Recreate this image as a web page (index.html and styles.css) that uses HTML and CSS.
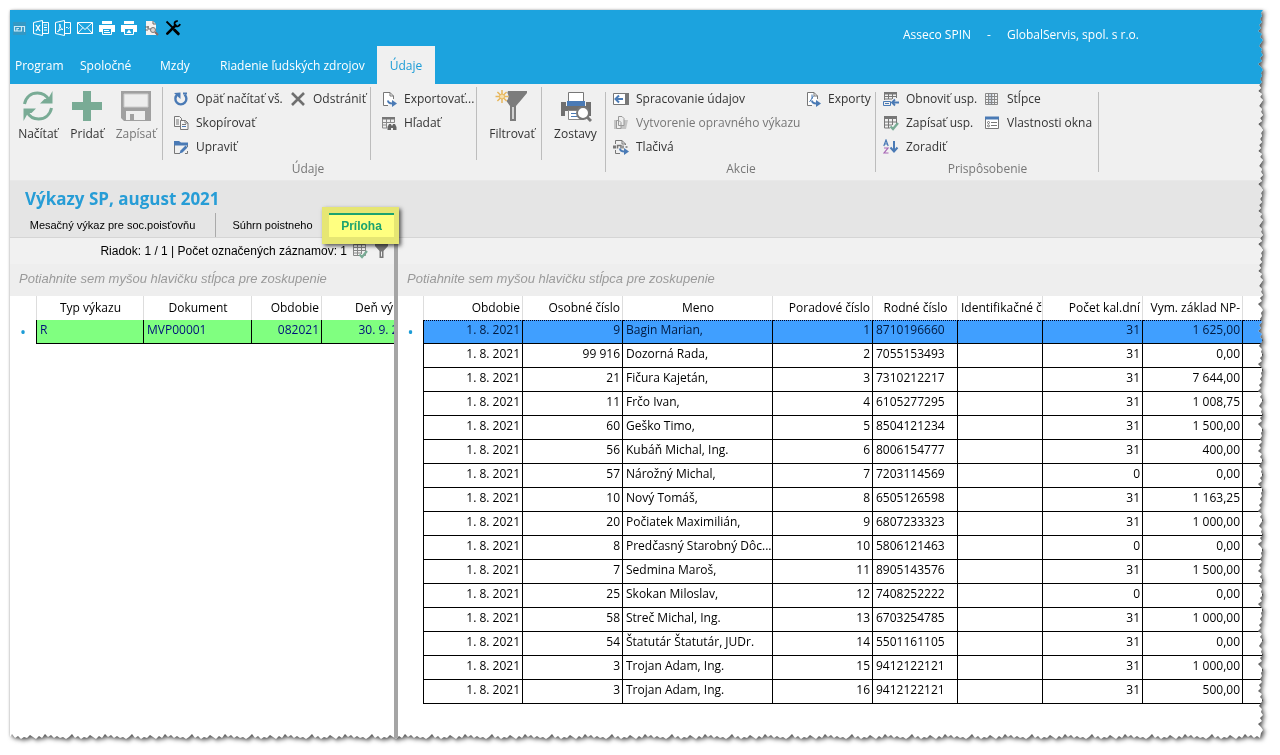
FILE: index.html
```html
<!DOCTYPE html>
<html lang="sk">
<head>
<meta charset="utf-8">
<title>Asseco SPIN</title>
<link rel="stylesheet" href="styles.css">
</head>
<body>
<div class="shadow">
<div class="window" id="window">
  <header class="titlebar">
    <div class="quick">
      <button class="quick-btn" aria-label="Aplikácia"><svg width="13" height="13" viewBox="0 0 13 13"><path d="M0 0h13v13H0z" fill="#3398c4"/><path d="M6 6.500H4V9h4.500V4.500H1.500V9H4M1.500 4.500h10V10" fill="none" stroke="#cdeaf7" stroke-width="1.200"/></svg></button>
      <button class="quick-btn" aria-label="Excel"><svg width="16" height="16" viewBox="0 0 16 16" fill="none" stroke="#fff"><path d="M.5 2.500l9-2v15l-9-2zM9.500 2.500h6v11h-6M11 5h3M11 7.500h3M11 10h3"/><path d="M3 5l4 6M7 5l-4 6" stroke-width="1.300"/></svg></button>
      <button class="quick-btn" aria-label="PDF"><svg width="16" height="16" viewBox="0 0 16 16" fill="none" stroke="#fff"><path d="M.5 2.500l9-2v15l-9-2zM9.500 2.500h6v11h-6M11 7.500h1.500l1 1 1-1"/><path d="M2.500 12c2-2 3-5 2.300-8 0 3 1 4.500 3.200 5.500-2-.3-4 .5-5.500 2.500"/></svg></button>
      <button class="quick-btn" aria-label="Pošta"><svg width="16" height="16" viewBox="0 0 16 16" fill="none" stroke="#fff"><path d="M.5 2.500h15v11H.5zM.5 2.500L8 9.500l7.500-7M.5 13.500l5.500-6M15.500 13.500l-5.500-6"/></svg></button>
      <button class="quick-btn" aria-label="Tlač"><svg width="16" height="16" viewBox="0 0 16 16"><path d="M3 1h10v3H3zM0 5h16v7h-3V9H3v3H0z" fill="#fff"/><path d="M3.500 8.500h9v6h-9z" fill="#1ca3de" stroke="#fff"/><path d="M5 10.500h5M5 12.500h6" stroke="#fff"/></svg></button>
      <button class="quick-btn" aria-label="Náhľad tlače"><svg width="16" height="16" viewBox="0 0 16 16"><path d="M3 1h10v3H3zM0 5h16v7h-3V9H3v3H0z" fill="#fff"/><path d="M3.500 8.500h9v6h-9z" fill="#1ca3de" stroke="#fff"/><path d="M5.500 13L8 9.500l2.500 3.500z" fill="#fff"/></svg></button>
      <button class="quick-btn" aria-label="Hľadať zostavu"><svg width="16" height="16" viewBox="0 0 16 16"><path d="M3 1h7l3 3v11H3z" fill="#f5f2f0"/><path d="M10 1v3h3M2 7h4M5 6v3h3M2 10h3" fill="none" stroke="#666"/><circle cx="10" cy="10" r="2.500" fill="#d8d4d2" stroke="#777"/><path d="M12 12l3 3" stroke="#886a66" stroke-width="2"/></svg></button>
      <button class="quick-btn" aria-label="Nástroje"><svg width="16" height="16" viewBox="0 0 16 16" fill="none" stroke="#000"><path d="M1.500 1.500l6 6" stroke-width="1.800"/><path d="M9.500 10l3.800 3.800" stroke-width="3" stroke-linecap="round"/><path d="M2.300 13.700L10.500 5.500" stroke-width="2.600" stroke-linecap="round"/><path d="M12.800 1.200c-2-.4-3.500 1-3.200 2.800.3 1.700 1.800 2.600 3.200 2.300 1.200-.2 2-1.200 2.200-2.300" stroke-width="1.800"/></svg></button>
    </div>
    <div class="caption"><span>Asseco SPIN</span><span>-</span><span>GlobalServis, spol. s r.o.</span></div>
  </header>
  <nav class="menu">
    <a href="#" class="m-program">Program</a>
    <a href="#" class="m-common">Spoločné</a>
    <a href="#" class="m-pay">Mzdy</a>
    <a href="#" class="m-hr">Riadenie ľudských zdrojov</a>
    <a href="#" class="m-active">Údaje</a>
  </nav>

  <div class="ribbon">
    <section class="group g-data">
      <div class="group-body">
        <div class="section s-main">
          <button class="big"><svg width="32" height="32" viewBox="0 0 32 32" fill="none" stroke="#79ab95" stroke-width="3"><path d="M2.500 14C4 7 9 3 15.500 3c5 0 9 2.500 11.500 7"/><path d="M30.500 1v12.500H18l4.500-4.500H26z" stroke="none" fill="#79ab95"/><path d="M29.500 18C28 25 23 29 16.500 29c-5 0-9-2.500-11.500-7"/><path d="M1.500 31V18.500H14L9.500 23H6z" stroke="none" fill="#79ab95"/></svg><span>Načítať</span></button>
          <button class="big"><svg width="32" height="32" viewBox="0 0 32 32"><path d="M12 1h8v11h11v8H20v11h-8V20H1v-8h11z" fill="#79ab95"/></svg><span>Pridať</span></button>
          <button class="big" disabled><svg width="32" height="32" viewBox="0 0 32 32"><path d="M1 1h30v30H4l-3-3z" fill="#a0a0a0"/><path d="M4 4h24v13H4z" fill="#ededed" stroke="#ccc"/><path d="M6 21h19v9H6z" fill="#eee"/><path d="M10 24h4v6h-4z" fill="#a0a0a0"/></svg><span>Zapísať</span></button>
        </div>
        <div class="section s-edit">
          <button class="small"><svg width="16" height="16" viewBox="0 0 16 16" fill="none" stroke="#4a7ab5" stroke-width="2.400"><path d="M4.500 3.500A5.500 5.500 0 1 0 11.500 3.700"/><path d="M1 2l6.500-.5V8z" fill="#4a7ab5" stroke="none"/><path d="M10 2.500h4" stroke-width="2"/></svg><span>Opäť načítať vš.</span></button>
          <button class="small"><svg width="16" height="16" viewBox="0 0 16 16" stroke="#6f6f6f" stroke-width="2.600"><path d="M2 2l12 12M14 2L2 14"/></svg><span>Odstrániť</span></button>
          <button class="small"><svg width="16" height="16" viewBox="0 0 16 16" fill="#f5f5f5" stroke="#777"><path d="M1.500 1.500h5l2 2v8h-7zM3 5h3M3 7h3M3 9h3"/><path d="M7.500 5.500h5l2.500 2.500v6.500H7.500z"/><path d="M12 5.500V8h3M9 9.500h4" fill="none"/><path d="M9 11.500h4" stroke="#4a7ab5"/></svg><span>Skopírovať</span></button>
          <button class="small row-start"><svg width="16" height="16" viewBox="0 0 16 16"><path d="M1.500 4v10.500H7M14.500 5v3M12 14.500h2.500V12" fill="none" stroke="#777"/><path d="M1 2h5l2 1.500h7v3H1z" fill="#4a7ab5"/><path d="M6.500 14.500l1-3 5-5 2 2-5 5z" fill="#4a7ab5"/></svg><span>Upraviť</span></button>
        </div>
        <div class="section s-export">
          <button class="small"><svg width="16" height="16" viewBox="0 0 16 16" fill="none" stroke="#777"><path d="M7 14.500H2.500V1.500H9l3.500 3.500v3" fill="#fff"/><path d="M9 1.500V5h3.500"/><path d="M7 9.500c0 2.500 2 3 5 3" stroke="#4a7ab5" stroke-width="2"/><path d="M11 9l5 3.500-5 3.500z" fill="#4a7ab5" stroke="none"/></svg><span>Exportovať...</span></button>
          <button class="small"><svg width="16" height="16" viewBox="0 0 16 16"><path d="M1 2h13v2.500H1z" fill="#777"/><path d="M1.500 4v9H6M1 7.500h12.500V4M1 10h5M5.500 4v9M9.500 4v4" fill="none" stroke="#888"/><path d="M8 9h2l.5 1.500h1L12 9h2l1.500 3v3H12v-2h-2v2H6.500v-3z" fill="#666"/></svg><span>Hľadať</span></button>
        </div>
        <div class="section s-filter">
          <button class="big"><svg width="34" height="32" viewBox="0 0 34 32"><path d="M13 1h19v2l-11 13v15h-6V16L10 9z" fill="#7c7c7c"/><path d="M18 17v12" stroke="#eee" stroke-width="1.500"/><circle cx="7" cy="6.500" r="6.500" fill="#f0f0f0"/><path d="M7 0v13M.5 6.500h13M2.400 2l9.200 9M11.600 2l-9.200 9" stroke="#e8b75c" stroke-width="1.500"/><circle cx="7" cy="6.500" r="2.500" fill="#f5dfae" stroke="#e8b75c"/></svg><span>Filtrovať</span></button>
        </div>
        <div class="section s-reports">
          <button class="big"><svg width="32" height="32" viewBox="0 0 32 32"><path d="M8.500 2.500h15v9h-15z" fill="#fff" stroke="#777"/><path d="M1 12h5v4h20v-4h5v14h-4v-5H5v5H1z" fill="#6f6f6f"/><path d="M7 11h18v5H7z" fill="#4a7ab5"/><path d="M8.500 20.500h15v9h-15z" fill="#fff" stroke="#888"/><path d="M11 23.500h5M11 26.500h6" stroke="#4a7ab5"/><circle cx="23" cy="23" r="6" fill="#fff" stroke="#777" stroke-width="2"/><path d="M27 27l4 4" stroke="#777" stroke-width="3"/></svg><span>Zostavy</span></button>
        </div>
      </div>
      <h2>Údaje</h2>
    </section>
    <section class="group g-actions">
      <div class="group-body">
        <div class="section s-actions">
          <button class="small"><svg width="16" height="16" viewBox="0 0 16 16"><path d="M.5 2.500h15v11H.5z" fill="#fff" stroke="#777"/><path d="M12 2h4v12h-4z" fill="#777"/><path d="M2 8h8M6 4.500L2.500 8 6 11.500" stroke="#4a7ab5" stroke-width="2" fill="none"/></svg><span>Spracovanie údajov</span></button>
          <button class="small"><svg width="16" height="16" viewBox="0 0 16 16" fill="none" stroke="#777"><path d="M7 14.500H2.500V1.500H9l3.500 3.500v3" fill="#fff"/><path d="M9 1.500V5h3.500"/><path d="M7 3.500v4.500M8.500 5L4.500 11" stroke="#4a7ab5"/><path d="M7 9.500c0 2.500 2 3 5 3" stroke="#4a7ab5" stroke-width="2"/><path d="M11 9l5 3.500-5 3.500z" fill="#4a7ab5" stroke="none"/></svg><span>Exporty</span></button>
          <button class="small row-start" disabled><svg width="16" height="16" viewBox="0 0 16 16"><path d="M1 5h14l-2 9H1z" fill="#c5c5c5"/><path d="M5.500 1.500h3.500l2 2v7H5.500zM3.500 5.500h2.500l2 2v6H3.500z" fill="#eee" stroke="#999"/></svg><span>Vytvorenie opravného výkazu</span></button>
          <button class="small row-start"><svg width="16" height="16" viewBox="0 0 16 16" fill="none" stroke="#777"><path d="M2.500 5V1.500H9l3.500 3.500v1M9 1.500V5h3.500M2.500 11v3.500H7"/><path d="M0 8h3" stroke-width="3"/><path d="M4.500 9.500v-3H8v3M10 6.500v3M12.500 8h2" stroke-width="1.500"/><path d="M7 9.500c0 2.500 2 3 5 3" stroke="#4a7ab5" stroke-width="2"/><path d="M11 9l5 3.500-5 3.500z" fill="#4a7ab5" stroke="none"/></svg><span>Tlačivá</span></button>
        </div>
      </div>
      <h2>Akcie</h2>
    </section>
    <section class="group g-custom">
      <div class="group-body">
        <div class="section s-custom">
          <button class="small"><svg width="16" height="16" viewBox="0 0 16 16" fill="none" stroke="#777"><path d="M1 1h13v2.500H1z" fill="#777" stroke="none"/><path d="M1.500 3v6M5.500 3v5M9.500 3v5M13.500 3v4M1 5.500h13M1 8h8"/><path d="M.5 10.500h7v4h-7zM2 12.500h4" stroke="#4a7ab5"/><path d="M9 11.500h7M12 8.500l-3 3 3 3" stroke="#4a7ab5" stroke-width="1.800"/></svg><span>Obnoviť usp.</span></button>
          <button class="small"><svg width="16" height="16" viewBox="0 0 16 16" fill="none" stroke="#888"><path d="M5 2h4v12H5z" fill="#cdd6e2" stroke="none"/><path d="M1.500 2.500h12v11h-12zM4.500 2v12M7.500 2v12M10.500 2v12M1 5.500h13M1 8.500h13M1 11.500h13"/></svg><span>Stĺpce</span></button>
          <button class="small"><svg width="16" height="16" viewBox="0 0 16 16" fill="none" stroke="#777"><path d="M1 1h13v3H1z" fill="#777" stroke="none"/><path d="M1.500 3v10H7M5.500 3v10M9.500 3v7M13.500 3v6M1 7h12M1 10h8"/><path d="M7.500 11.500l2.500 2.500 5-6" stroke="#79ab95" stroke-width="2.400"/></svg><span>Zapísať usp.</span></button>
          <button class="small"><svg width="16" height="16" viewBox="0 0 16 16" fill="none" stroke="#777"><path d="M1.500 2.500h13v11h-13z" fill="#fff"/><path d="M1 1.500h14v3H1z" fill="#4a7ab5" stroke="none"/><path d="M7 7.500h6M7 10.500h6"/><circle cx="4.500" cy="7.500" r="1"/><circle cx="4.500" cy="10.800" r="1"/></svg><span>Vlastnosti okna</span></button>
          <button class="small row-start"><svg width="16" height="16" viewBox="0 0 16 16" fill="none"><path d="M.8 7L3 1l2.200 6M1.500 5h3" stroke="#4a7ab5" stroke-width="1.200"/><path d="M1 9h4L1 14h4.500" stroke="#a766b5" stroke-width="1.200"/><path d="M11 2v11M7.500 8.500L11 12.500l3.500-4" stroke="#4a7ab5" stroke-width="2"/></svg><span>Zoradiť</span></button>
        </div>
      </div>
      <h2>Prispôsobenie</h2>
    </section>
  </div>

  <div class="heading">
    <h1>Výkazy SP, august 2021</h1>
    <div class="tabs" role="tablist">
      <button class="tab t-month" role="tab">Mesačný výkaz pre soc.poisťovňu</button>
      <button class="tab t-sum" role="tab">Súhrn poistneho</button>
      <button class="tab t-annex" role="tab" aria-selected="true"><span>Príloha</span></button>
    </div>
  </div>

  <main class="panes">
    <section class="pane pane-left">
      <div class="status">
        <span>Riadok: 1 / 1 | Počet označených záznamov: 1</span>
        <svg width="16" height="16" viewBox="0 0 16 16" fill="none" stroke="#888"><path d="M1.500 1.500h12v11h-12zM1 4.500h13M1 7.500h13M1 10h8M5.500 2v11M9.500 2v9"/><path d="M7.500 11.500l2.500 2.500 5-6" stroke="#79ab95" stroke-width="2.200"/></svg>
        <svg width="16" height="16" viewBox="0 0 16 16"><path d="M2 1h13v2l-4.500 5v7h-4V8L2 3z" fill="#777"/><path d="M8.500 8.500v5" stroke="#eee"/></svg>
      </div>
      <div class="grouping">Potiahnite sem myšou hlavičku stĺpca pre zoskupenie</div>
      <table class="grid grid-left">
        <colgroup><col class="w-mark"><col class="w-type"><col class="w-doc"><col class="w-per"><col class="w-day"></colgroup>
        <thead><tr><th></th><th class="c">Typ výkazu</th><th class="c">Dokument</th><th>Obdobie</th><th>Deň výkazu</th></tr></thead>
        <tbody><tr class="green"><td class="mark">•</td><td class="l">R</td><td class="l">MVP00001</td><td>082021</td><td>30. 9. 2021</td></tr></tbody>
      </table>
    </section>
    <div class="splitter"></div>
    <section class="pane pane-right">
      <div class="status"></div>
      <div class="grouping">Potiahnite sem myšou hlavičku stĺpca pre zoskupenie</div>
      <table class="grid grid-right">
        <colgroup><col class="w-mark2"><col class="w-99"><col class="w-100"><col class="w-150"><col class="w-100"><col class="w-85"><col class="w-85"><col class="w-100"><col class="w-100"><col></colgroup>
        <thead><tr><th></th><th>Obdobie</th><th>Osobné číslo</th><th class="c">Meno</th><th>Poradové číslo</th><th class="c">Rodné číslo</th><th class="l">Identifikačné č</th><th>Počet kal.dní</th><th>Vym. základ NP-</th><th></th></tr></thead>
        <tbody>
          <tr class="blue"><td class="mark">•</td><td>1. 8. 2021</td><td>9</td><td class="l">Bagin Marian,</td><td>1</td><td class="l">8710196660</td><td></td><td>31</td><td>1 625,00</td><td></td></tr>
          <tr><td></td><td>1. 8. 2021</td><td>99 916</td><td class="l">Dozorná Rada,</td><td>2</td><td class="l">7055153493</td><td></td><td>31</td><td>0,00</td><td></td></tr>
          <tr><td></td><td>1. 8. 2021</td><td>21</td><td class="l">Fičura Kajetán,</td><td>3</td><td class="l">7310212217</td><td></td><td>31</td><td>7 644,00</td><td></td></tr>
          <tr><td></td><td>1. 8. 2021</td><td>11</td><td class="l">Frčo Ivan,</td><td>4</td><td class="l">6105277295</td><td></td><td>31</td><td>1 008,75</td><td></td></tr>
          <tr><td></td><td>1. 8. 2021</td><td>60</td><td class="l">Geško Timo,</td><td>5</td><td class="l">8504121234</td><td></td><td>31</td><td>1 500,00</td><td></td></tr>
          <tr><td></td><td>1. 8. 2021</td><td>56</td><td class="l">Kubáň Michal, Ing.</td><td>6</td><td class="l">8006154777</td><td></td><td>31</td><td>400,00</td><td></td></tr>
          <tr><td></td><td>1. 8. 2021</td><td>57</td><td class="l">Nárožný Michal,</td><td>7</td><td class="l">7203114569</td><td></td><td>0</td><td>0,00</td><td></td></tr>
          <tr><td></td><td>1. 8. 2021</td><td>10</td><td class="l">Nový Tomáš,</td><td>8</td><td class="l">6505126598</td><td></td><td>31</td><td>1 163,25</td><td></td></tr>
          <tr><td></td><td>1. 8. 2021</td><td>20</td><td class="l">Počiatek Maximilián,</td><td>9</td><td class="l">6807233323</td><td></td><td>31</td><td>1 000,00</td><td></td></tr>
          <tr><td></td><td>1. 8. 2021</td><td>8</td><td class="l">Predčasný Starobný Dôc...</td><td>10</td><td class="l">5806121463</td><td></td><td>0</td><td>0,00</td><td></td></tr>
          <tr><td></td><td>1. 8. 2021</td><td>7</td><td class="l">Sedmina Maroš,</td><td>11</td><td class="l">8905143576</td><td></td><td>31</td><td>1 500,00</td><td></td></tr>
          <tr><td></td><td>1. 8. 2021</td><td>25</td><td class="l">Skokan Miloslav,</td><td>12</td><td class="l">7408252222</td><td></td><td>0</td><td>0,00</td><td></td></tr>
          <tr><td></td><td>1. 8. 2021</td><td>58</td><td class="l">Streč Michal, Ing.</td><td>13</td><td class="l">6703254785</td><td></td><td>31</td><td>1 000,00</td><td></td></tr>
          <tr><td></td><td>1. 8. 2021</td><td>54</td><td class="l">Štatutár Štatutár, JUDr.</td><td>14</td><td class="l">5501161105</td><td></td><td>31</td><td>0,00</td><td></td></tr>
          <tr><td></td><td>1. 8. 2021</td><td>3</td><td class="l">Trojan Adam, Ing.</td><td>15</td><td class="l">9412122121</td><td></td><td>31</td><td>1 000,00</td><td></td></tr>
          <tr><td></td><td>1. 8. 2021</td><td>3</td><td class="l">Trojan Adam, Ing.</td><td>16</td><td class="l">9412122121</td><td></td><td>31</td><td>500,00</td><td></td></tr>
        </tbody>
      </table>
    </section>
  </main>
</div>
</div>
<script src="torn-edge.js"></script>
</body>
</html>
```
FILE: torn-edge.js
```js
// Cuts the right and bottom sides of the window into a ragged paper edge.
(function () {
  var el = document.getElementById('window');
  var depths = [0, 2, 1, 3, 1, 4, 2, 5, 1, 3, 0, 2, 4, 1, 2, 0, 3, 1, 5, 2];
  function tear() {
    var w = el.offsetWidth, h = el.offsetHeight, pts = ['0px 0px'], i = 0;
    for (var y = 0; y < h - 4; y += 3) pts.push((w - depths[i++ % 20]) + 'px ' + y + 'px');
    for (var x = w - 3; x > 0; x -= 3) pts.push(x + 'px ' + (h - depths[i++ % 20]) + 'px');
    pts.push('0px ' + (h - 2) + 'px');
    el.style.clipPath = 'polygon(' + pts.join(',') + ')';
  }
  tear();
  window.addEventListener('resize', tear);
})();
```
FILE: styles.css
```css
* { box-sizing: border-box; }

body {
  margin: 0;
  padding: 10px 17px 16px 10px;
  background: #fff;
  font: 12px/16px "Open Sans", "Noto Sans", sans-serif;
  color: #222;
}

button {
  margin: 0;
  padding: 0;
  border: 0;
  background: none;
  font: inherit;
  color: inherit;
  white-space: nowrap;
}

svg { display: block; flex: none; }

.shadow {
  filter: drop-shadow(0 0 1px rgba(0, 0, 0, .2)) drop-shadow(2px 2px 2px rgba(0, 0, 0, .65));
}

.window {
  display: flex;
  flex-direction: column;
  min-height: calc(100vh - 26px);
  background: #fff;
}

.titlebar {
  display: flex;
  align-items: center;
  height: 36px;
  background: #1ca3de;
  color: #fff;
}

.quick { display: flex; gap: 6px; padding-left: 1px; flex: 1; }
.quick-btn { display: flex; align-items: center; justify-content: center; width: 16px; height: 16px; }

.caption { display: flex; gap: 16px; width: 360px; padding-top: 14px; }

.menu {
  display: flex;
  height: 38px;
  background: #1ca3de;
  line-height: 40px;
}

.menu a { color: #fff; text-decoration: none; white-space: nowrap; padding-left: 5px; }
.menu .m-program { width: 65px; }
.menu .m-common { width: 80px; }
.menu .m-pay { width: 60px; }
.menu .m-hr { width: 162px; }
.menu .m-active { width: 58px; padding: 0; text-align: center; background: #f0f0f0; color: #1c9cd6; }

.ribbon {
  display: flex;
  height: 97px;
  background: #f0f0f0;
  color: #333;
  border-bottom: 1px solid #e8e8e8;
}

.group { display: flex; flex-direction: column; position: relative; }
.group::after {
  content: "";
  position: absolute;
  right: 0;
  top: 8px;
  bottom: 8px;
  border-right: 1px solid #bdbdbd;
}
.group h2 { margin: 0; font-size: 12px; font-weight: 400; line-height: 18px; text-align: center; color: #777; }
.group-body { display: flex; height: 76px; padding-top: 3px; }
.g-data { width: 596px; }
.g-actions { width: 270px; }
.g-custom { width: 223px; }

.section { align-content: start; }
.s-main, .s-filter, .s-reports { display: flex; justify-content: center; }
.s-edit, .s-export, .s-actions, .s-custom { display: grid; grid-auto-rows: 24px; justify-items: start; padding-left: 10px; }
.s-main, .s-edit, .s-export, .s-filter { border-right: 1px solid #bdbdbd; }
.s-main { width: 153px; padding-left: 2px; }
.s-edit { width: 208px; grid-template-columns: 117px auto; }
.s-export { width: 106px; padding-left: 10px; }
.s-filter { width: 65px; padding-left: 6px; }
.s-reports { width: 64px; padding-left: 3px; }
.s-actions { padding-left: 7px; grid-template-columns: 192px auto; }
.s-custom { padding-left: 7px; grid-template-columns: 101px auto; }
.row-start { grid-column: 1 / -1; }

.big { display: flex; flex-direction: column; align-items: center; gap: 4px; width: 49px; padding-top: 3px; }
.small { display: flex; align-items: center; gap: 7px; height: 24px; }
button:disabled { color: #777; }

.heading { background: #e5e5e5; border-bottom: 1px solid #d5d5d5; }
.heading h1 { margin: 0; padding: 6px 15px 2px; font-size: 17px; line-height: 24px; color: #279dd6; }

.tabs { display: flex; height: 24px; font-family: "Liberation Sans", Arial, sans-serif; font-size: 11px; color: #000; }
.t-month { width: 206px; border-right: 1px solid #aaa; }
.t-sum { width: 113px; }
.t-annex { position: relative; z-index: 2; width: 65px; color: #1ba36f; font-size: 12px; font-weight: 700; }
.t-annex::before {
  content: "";
  position: absolute;
  inset: -6px -5px -7px -7px;
  background: #e6e673;
  box-shadow: 2px 2px 4px rgba(0, 0, 0, .65);
}
.t-annex span {
  position: relative;
  display: block;
  height: 24px;
  border-top: 2px solid #1ba36f;
  background: #ffff80;
  line-height: 22px;
}

.panes { display: flex; flex: 1; }
.pane { overflow: hidden; }
.pane-left { flex: 0 0 384px; }
.pane-right { flex: 1; }
.splitter { flex: 0 0 4px; background: #a5a5a5; }

.status {
  display: flex;
  align-items: center;
  justify-content: flex-end;
  gap: 5px;
  height: 26px;
  padding-right: 5px;
  background: #f1f1f1;
  font: 12px/16px "Liberation Sans", Arial, sans-serif;
  color: #000;
}

.grouping {
  height: 32px;
  padding-left: 9px;
  background: #eee;
  font: italic 13px/30px "Liberation Sans", Arial, sans-serif;
  color: #9a9a9a;
}

.grid { table-layout: fixed; border-collapse: separate; border-spacing: 0; color: #000; }
.grid-left { width: 412px; }
.grid-right { width: 100%; }
.w-mark { width: 27px; }
.w-mark2 { width: 26px; }
.w-type { width: 107px; }
.w-doc { width: 108px; }
.w-per { width: 70px; }
.w-day { width: 100px; }
.w-99 { width: 99px; }
.w-100 { width: 100px; }
.w-150 { width: 150px; }
.w-85 { width: 85px; }

.grid th, .grid td {
  height: 24px;
  padding: 0 2px 0 3px;
  overflow: hidden;
  text-align: right;
  white-space: nowrap;
  line-height: 16px;
}
.grid th { font-weight: 400; border-right: 1px solid #ddd; }
.grid td { padding-bottom: 3px; border-right: 1px solid #000; border-bottom: 1px solid #000; }
.grid .l { text-align: left; }
.grid .c { text-align: center; }
.grid td:first-child { border-bottom: 0; background: #fff; }
.grid td.mark { padding: 0; text-align: center; font-size: 16px; color: #1c9cd6; }
.green td { background: #80ff80; color: #00107a; }
.blue td { background: #409fff; color: #001a40; }
.blue td:not(.mark) { padding-bottom: 4px; border-top: 1px dotted #002; }
```
